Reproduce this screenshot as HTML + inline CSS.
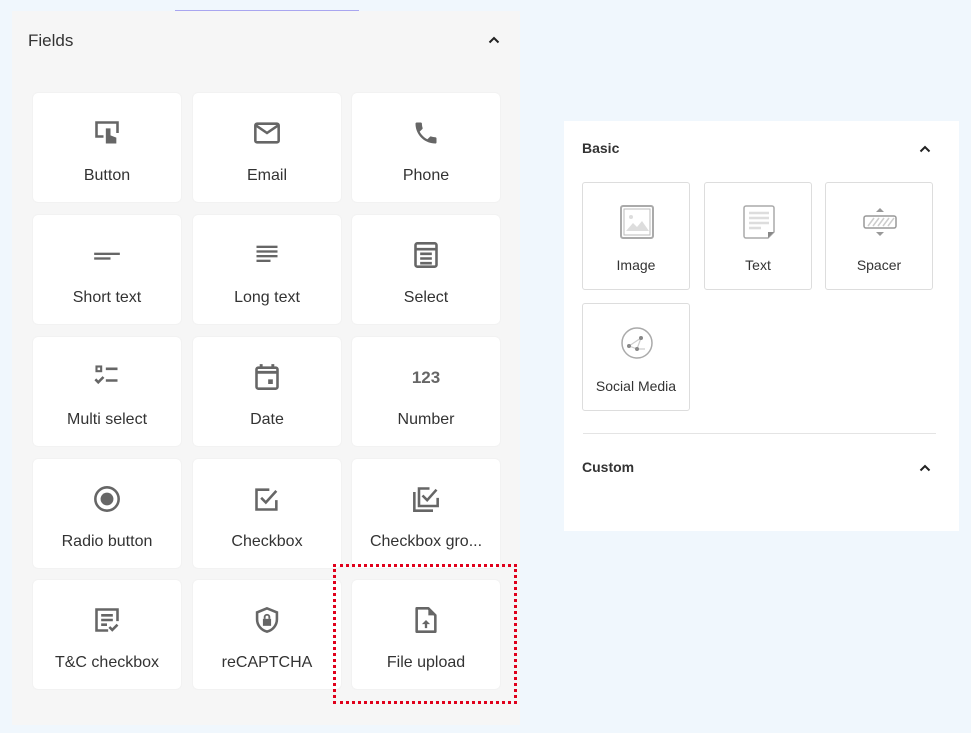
<!DOCTYPE html>
<html><head><meta charset="utf-8"><style>
*{box-sizing:border-box;margin:0;padding:0}
body{width:971px;height:733px;background:#f0f7fd;font-family:"Liberation Sans",sans-serif;position:relative;overflow:hidden}
.lp{position:absolute;left:12px;top:11px;width:508px;height:714px;background:#f6f6f6}
.pl{position:absolute;left:175px;top:10px;width:184px;height:2px;background:#a9a6f0}
.ft{position:absolute;left:28px;top:31px;font-size:17px;color:#333}
.card{position:absolute;width:148px;height:109px;background:#fff;border-radius:5px;box-shadow:0 0 2px rgba(0,0,0,.06)}
.card svg{position:absolute;left:60px;top:26px;width:28px;height:28px}
.card .l{position:absolute;left:0;right:0;top:74px;text-align:center;font-size:16px;color:#333;white-space:nowrap}
.red{position:absolute;left:333px;top:564px;width:184px;height:140px;border:3px dotted #e0001b}
.rp{position:absolute;left:564px;top:121px;width:395px;height:410px;background:#fff}
.bt{position:absolute;font-size:14px;font-weight:bold;color:#333}
.bc{position:absolute;width:108px;height:108px;border:1px solid #ddd;border-radius:3px;background:#fff}
.bc svg{position:absolute;left:37px;top:22px;width:34px;height:34px}
.bc .l{position:absolute;left:0;right:0;top:74px;text-align:center;font-size:14px;color:#333;white-space:nowrap}
.chev{position:absolute}
</style></head><body>
<div class="pl"></div>
<div class="lp"></div>
<div class="ft">Fields</div>
<svg class="chev" style="left:488px;top:35px" width="12" height="10" viewBox="0 0 12 10"><path d="M1.5 7.5 6 3 10.5 7.5" fill="none" stroke="#222" stroke-width="2"/></svg>

<div class="card" style="left:33px;top:93px"><svg viewBox="0 0 24 24" fill="none" stroke="#666" stroke-width="2.2"><path d="M9 15H3V3h18v9"/><path d="M11 8v13h9v-5l-5-2v-6z" fill="#666" stroke="none"/></svg><div class="l">Button</div></div>
<div class="card" style="left:193px;top:93px"><svg viewBox="0 0 24 24" fill="none" stroke="#666" stroke-width="2.2"><rect x="2" y="4" width="20" height="16" rx="1.5"/><path d="M2.5 5.5 12 12l9.5-6.5"/></svg><div class="l">Email</div></div>
<div class="card" style="left:352px;top:93px"><svg viewBox="0 0 24 24"><path fill="#666" d="M6.6 10.8c1.4 2.8 3.8 5.1 6.6 6.6l2.2-2.2c.3-.3.7-.4 1-.2 1.1.4 2.3.6 3.6.6.6 0 1 .4 1 1V20c0 .6-.4 1-1 1C10.6 21 3 13.4 3 4c0-.6.4-1 1-1h3.5c.6 0 1 .4 1 1 0 1.3.2 2.5.6 3.6.1.3 0 .7-.2 1z"/></svg><div class="l">Phone</div></div>

<div class="card" style="left:33px;top:215px"><svg viewBox="0 0 24 24" fill="#666"><rect x="1" y="10" width="22" height="2"/><rect x="1" y="14" width="14" height="2"/></svg><div class="l">Short text</div></div>
<div class="card" style="left:193px;top:215px"><svg viewBox="0 0 24 24" fill="#666"><rect x="3" y="4" width="18" height="2"/><rect x="3" y="8" width="18" height="2"/><rect x="3" y="12" width="18" height="2"/><rect x="3" y="16" width="12" height="2"/></svg><div class="l">Long text</div></div>
<div class="card" style="left:352px;top:215px"><svg viewBox="0 0 24 24" fill="none" stroke="#666" stroke-width="2.2"><rect x="3" y="2" width="18" height="20" rx="1.5"/><path d="M7 11h10M7 15h10M7 19h10M3 7h18"/></svg><div class="l">Select</div></div>

<div class="card" style="left:33px;top:337px"><svg viewBox="0 0 24 24" fill="none" stroke="#666" stroke-width="2.2"><rect x="3" y="3" width="4" height="4" stroke-width="1.8"/><path d="M11 5h10M11 15h10M2 14l2.5 2.5L9 12"/></svg><div class="l">Multi select</div></div>
<div class="card" style="left:193px;top:337px"><svg viewBox="0 0 24 24" fill="none" stroke="#666" stroke-width="2.2"><rect x="3" y="4" width="18" height="18" rx="1.5"/><path d="M3 8h18M7 1v4M17 1v4" stroke-width="2.5"/><rect x="13" y="14" width="4" height="4" fill="#666" stroke="none"/></svg><div class="l">Date</div></div>
<div class="card" style="left:352px;top:337px"><svg viewBox="0 0 28 28" style="overflow:visible"><text x="14" y="20" text-anchor="middle" font-family="Liberation Sans" font-weight="bold" font-size="17" fill="#666">123</text></svg><div class="l">Number</div></div>

<div class="card" style="left:33px;top:459px"><svg viewBox="0 0 24 24"><circle cx="12" cy="12" r="10" fill="none" stroke="#666" stroke-width="2.2"/><circle cx="12" cy="12" r="5.5" fill="#666"/></svg><div class="l">Radio button</div></div>
<div class="card" style="left:193px;top:459px"><svg viewBox="0 0 24 24" fill="none" stroke="#666" stroke-width="2.2"><path d="M20 13v8H3V4h11"/><path d="M7 11l4 4 9-10"/></svg><div class="l">Checkbox</div></div>
<div class="card" style="left:352px;top:459px"><svg viewBox="0 0 24 24" fill="none" stroke="#666" stroke-width="2.2"><path d="M2 6v16h16"/><path d="M22 11v7H6V3h9"/><path d="M9 9l4 4 8-9"/></svg><div class="l">Checkbox gro...</div></div>

<div class="card" style="left:33px;top:580px"><svg viewBox="0 0 24 24" fill="none" stroke="#666" stroke-width="2.2"><path d="M13 21H3V3h18v10"/><path d="M7 8h10M7 12h10M7 16h5M14 18l2.5 2.5L21 16"/></svg><div class="l">T&amp;C checkbox</div></div>
<div class="card" style="left:193px;top:580px"><svg viewBox="0 0 24 24"><path d="M12 2 3.5 5.5v6c0 5 3.6 9.3 8.5 10.5 4.9-1.2 8.5-5.5 8.5-10.5v-6z" fill="none" stroke="#666" stroke-width="2.2"/><rect x="8.5" y="11" width="7" height="6" fill="#666"/><path d="M10 11V9.5a2 2 0 0 1 4 0V11" fill="none" stroke="#666" stroke-width="1.6"/></svg><div class="l">reCAPTCHA</div></div>
<div class="card" style="left:352px;top:580px"><svg viewBox="0 0 24 24"><path d="M4 2h10l6 6v14H4z" fill="none" stroke="#666" stroke-width="2.2" stroke-linejoin="round"/><path d="M14 2v6h6" fill="#666"/><path d="M12 12l-3.5 3.5H11V19h2v-3.5h2.5z" fill="#666"/></svg><div class="l">File upload</div></div>
<div class="red"></div>

<div class="rp"></div>
<div class="bt" style="left:582px;top:140px">Basic</div>
<svg class="chev" style="left:919px;top:144px" width="12" height="10" viewBox="0 0 12 10"><path d="M1.5 7.5 6 3 10.5 7.5" fill="none" stroke="#222" stroke-width="2"/></svg>
<div class="bc" style="left:582px;top:182px"><svg viewBox="0 0 34 34"><rect x="1" y="1" width="32" height="32" rx="2" fill="none" stroke="#aaa" stroke-width="2"/><rect x="4" y="4" width="26" height="26" fill="none" stroke="#bbb" stroke-width="1"/><circle cx="11" cy="12" r="2" fill="#ddd"/><path d="M6 26l7-8 4 4 5-6 7 10z" fill="#ddd"/></svg><div class="l">Image</div></div>
<div class="bc" style="left:704px;top:182px"><svg viewBox="0 0 34 34"><path d="M2 3a2 2 0 0 1 2-2h26a2 2 0 0 1 2 2v24l-6 6H4a2 2 0 0 1-2-2z" fill="none" stroke="#aaa" stroke-width="1.5"/><path d="M26 33v-6h6z" fill="#888"/><path d="M7 8h20M7 13h20M7 18h20M7 23h12" stroke="#ddd" stroke-width="2.5"/></svg><div class="l">Text</div></div>
<div class="bc" style="left:825px;top:182px"><svg viewBox="0 0 34 34"><path d="M13 7l4-4 4 4zM13 27l4 4 4-4z" fill="#999"/><rect x="1" y="11" width="32" height="12" rx="2" fill="#fff" stroke="#999" stroke-width="1.5"/><path d="M5 21l6-8M10 21l6-8M15 21l6-8M20 21l6-8M25 21l6-8" stroke="#ccc" stroke-width="1.5"/></svg><div class="l">Spacer</div></div>
<div class="bc" style="left:582px;top:303px"><svg viewBox="0 0 34 34"><circle cx="17" cy="17" r="15" fill="none" stroke="#aaa" stroke-width="1.5"/><path d="M9 20l8 3 4-11M17 23l8 0M9 20l12-8" stroke="#ccc" stroke-width="1.2" fill="none"/><circle cx="9" cy="20" r="2" fill="#888"/><circle cx="21" cy="12" r="2" fill="#888"/><circle cx="17" cy="23" r="2" fill="#888"/></svg><div class="l">Social Media</div></div>
<div style="position:absolute;left:583px;top:433px;width:353px;height:1px;background:#e4e4e4"></div>
<div class="bt" style="left:582px;top:459px">Custom</div>
<svg class="chev" style="left:919px;top:463px" width="12" height="10" viewBox="0 0 12 10"><path d="M1.5 7.5 6 3 10.5 7.5" fill="none" stroke="#222" stroke-width="2"/></svg>
</body></html>
